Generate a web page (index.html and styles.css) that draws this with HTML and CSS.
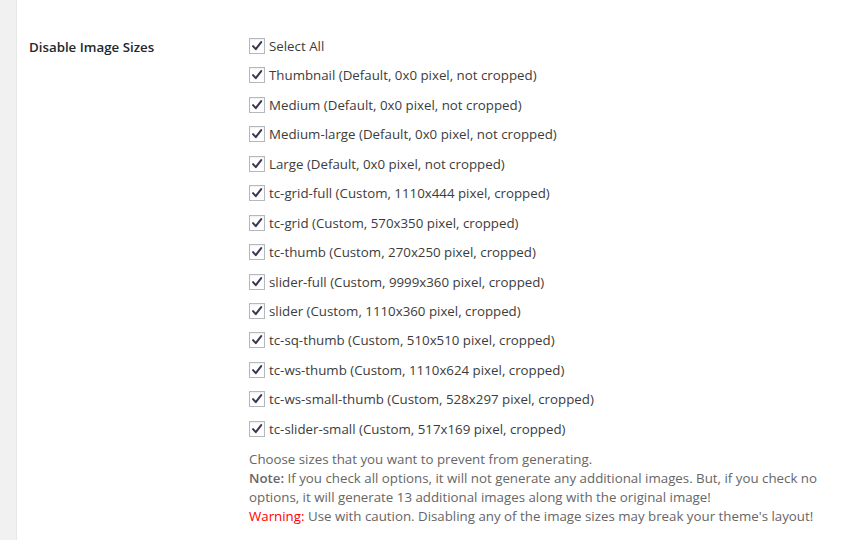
FILE: index.html
```html
<!DOCTYPE html>
<html lang="en">

<head>
    <meta charset="UTF-8">
    <title>Disable Image Sizes</title>
    <link rel="stylesheet" href="styles.css">
</head>

<body>
    <div class="sidebar"></div>

    <div class="wrap">
        <div class="form-row">
            <div class="label">Disable Image Sizes</div>
            <div class="field">
                <ul class="options">
                    <li><span class="box"><svg viewBox="0 0 16 16"><path d="M3.5 8.2 L6.6 11.6 L12.8 3.6" /></svg></span>Select All</li>
                    <li><span class="box"><svg viewBox="0 0 16 16"><path d="M3.5 8.2 L6.6 11.6 L12.8 3.6" /></svg></span>Thumbnail (Default, 0x0 pixel, not cropped)</li>
                    <li><span class="box"><svg viewBox="0 0 16 16"><path d="M3.5 8.2 L6.6 11.6 L12.8 3.6" /></svg></span>Medium (Default, 0x0 pixel, not cropped)</li>
                    <li><span class="box"><svg viewBox="0 0 16 16"><path d="M3.5 8.2 L6.6 11.6 L12.8 3.6" /></svg></span>Medium-large (Default, 0x0 pixel, not cropped)</li>
                    <li><span class="box"><svg viewBox="0 0 16 16"><path d="M3.5 8.2 L6.6 11.6 L12.8 3.6" /></svg></span>Large (Default, 0x0 pixel, not cropped)</li>
                    <li><span class="box"><svg viewBox="0 0 16 16"><path d="M3.5 8.2 L6.6 11.6 L12.8 3.6" /></svg></span>tc-grid-full (Custom, 1110x444 pixel, cropped)</li>
                    <li><span class="box"><svg viewBox="0 0 16 16"><path d="M3.5 8.2 L6.6 11.6 L12.8 3.6" /></svg></span>tc-grid (Custom, 570x350 pixel, cropped)</li>
                    <li><span class="box"><svg viewBox="0 0 16 16"><path d="M3.5 8.2 L6.6 11.6 L12.8 3.6" /></svg></span>tc-thumb (Custom, 270x250 pixel, cropped)</li>
                    <li><span class="box"><svg viewBox="0 0 16 16"><path d="M3.5 8.2 L6.6 11.6 L12.8 3.6" /></svg></span>slider-full (Custom, 9999x360 pixel, cropped)</li>
                    <li><span class="box"><svg viewBox="0 0 16 16"><path d="M3.5 8.2 L6.6 11.6 L12.8 3.6" /></svg></span>slider (Custom, 1110x360 pixel, cropped)</li>
                    <li><span class="box"><svg viewBox="0 0 16 16"><path d="M3.5 8.2 L6.6 11.6 L12.8 3.6" /></svg></span>tc-sq-thumb (Custom, 510x510 pixel, cropped)</li>
                    <li><span class="box"><svg viewBox="0 0 16 16"><path d="M3.5 8.2 L6.6 11.6 L12.8 3.6" /></svg></span>tc-ws-thumb (Custom, 1110x624 pixel, cropped)</li>
                    <li><span class="box"><svg viewBox="0 0 16 16"><path d="M3.5 8.2 L6.6 11.6 L12.8 3.6" /></svg></span>tc-ws-small-thumb (Custom, 528x297 pixel, cropped)</li>
                    <li><span class="box"><svg viewBox="0 0 16 16"><path d="M3.5 8.2 L6.6 11.6 L12.8 3.6" /></svg></span>tc-slider-small (Custom, 517x169 pixel, cropped)</li>
                </ul>
                <p class="description">
                    Choose sizes that you want to prevent from generating.<br>
                    <strong>Note:</strong> If you check all options, it will not generate any additional images. But, if you check no options, it will generate 13 additional images along with the original image!<br>
                    <span class="warning">Warning:</span> Use with caution. Disabling any of the image sizes may break your theme's layout!
                </p>
            </div>
        </div>
    </div>
</body>

</html>
```

FILE: styles.css
```css
body {
    margin: 0;
    padding: 0;
    display: flex;
    min-height: 100vh;
    background-color: #fff;
    font-family: 'Open Sans', sans-serif;
    font-size: 13.3px;
    color: #3c3c3c;
}

.sidebar {
    width: 16px;
    flex-shrink: 0;
    background-color: #f1f1f1;
    border-right: 1px solid #e8e8e8;
}

.wrap {
    flex: 1;
    padding: 38px 0 0 12px;
}

.form-row {
    display: flex;
}

.label {
    width: 220px;
    flex-shrink: 0;
    font-weight: 600;
    color: #23282d;
    padding-top: 0;
}

.field {
    flex: 1;
    padding-right: 20px;
}

.options {
    list-style: none;
    margin: 0;
    padding: 0;
    display: flex;
    flex-direction: column;
    gap: 13.45px;
}

.options li {
    display: flex;
    align-items: center;
    height: 16px;
    white-space: nowrap;
}

.box {
    width: 14px;
    height: 14px;
    border: 1px solid #b4b9be;
    background-color: #fff;
    margin-right: 4px;
    flex-shrink: 0;
    box-shadow: inset 0 1px 2px rgba(0, 0, 0, 0.07);
}

.box svg {
    display: block;
    width: 14px;
    height: 14px;
}

.box path {
    fill: none;
    stroke: #3a3552;
    stroke-width: 2.3;
    stroke-linecap: round;
    stroke-linejoin: round;
}

.description {
    margin: 13px 0 0;
    color: #666;
    line-height: 19px;
}

.description strong {
    font-weight: 600;
}

.warning {
    color: #f00;
}
```
